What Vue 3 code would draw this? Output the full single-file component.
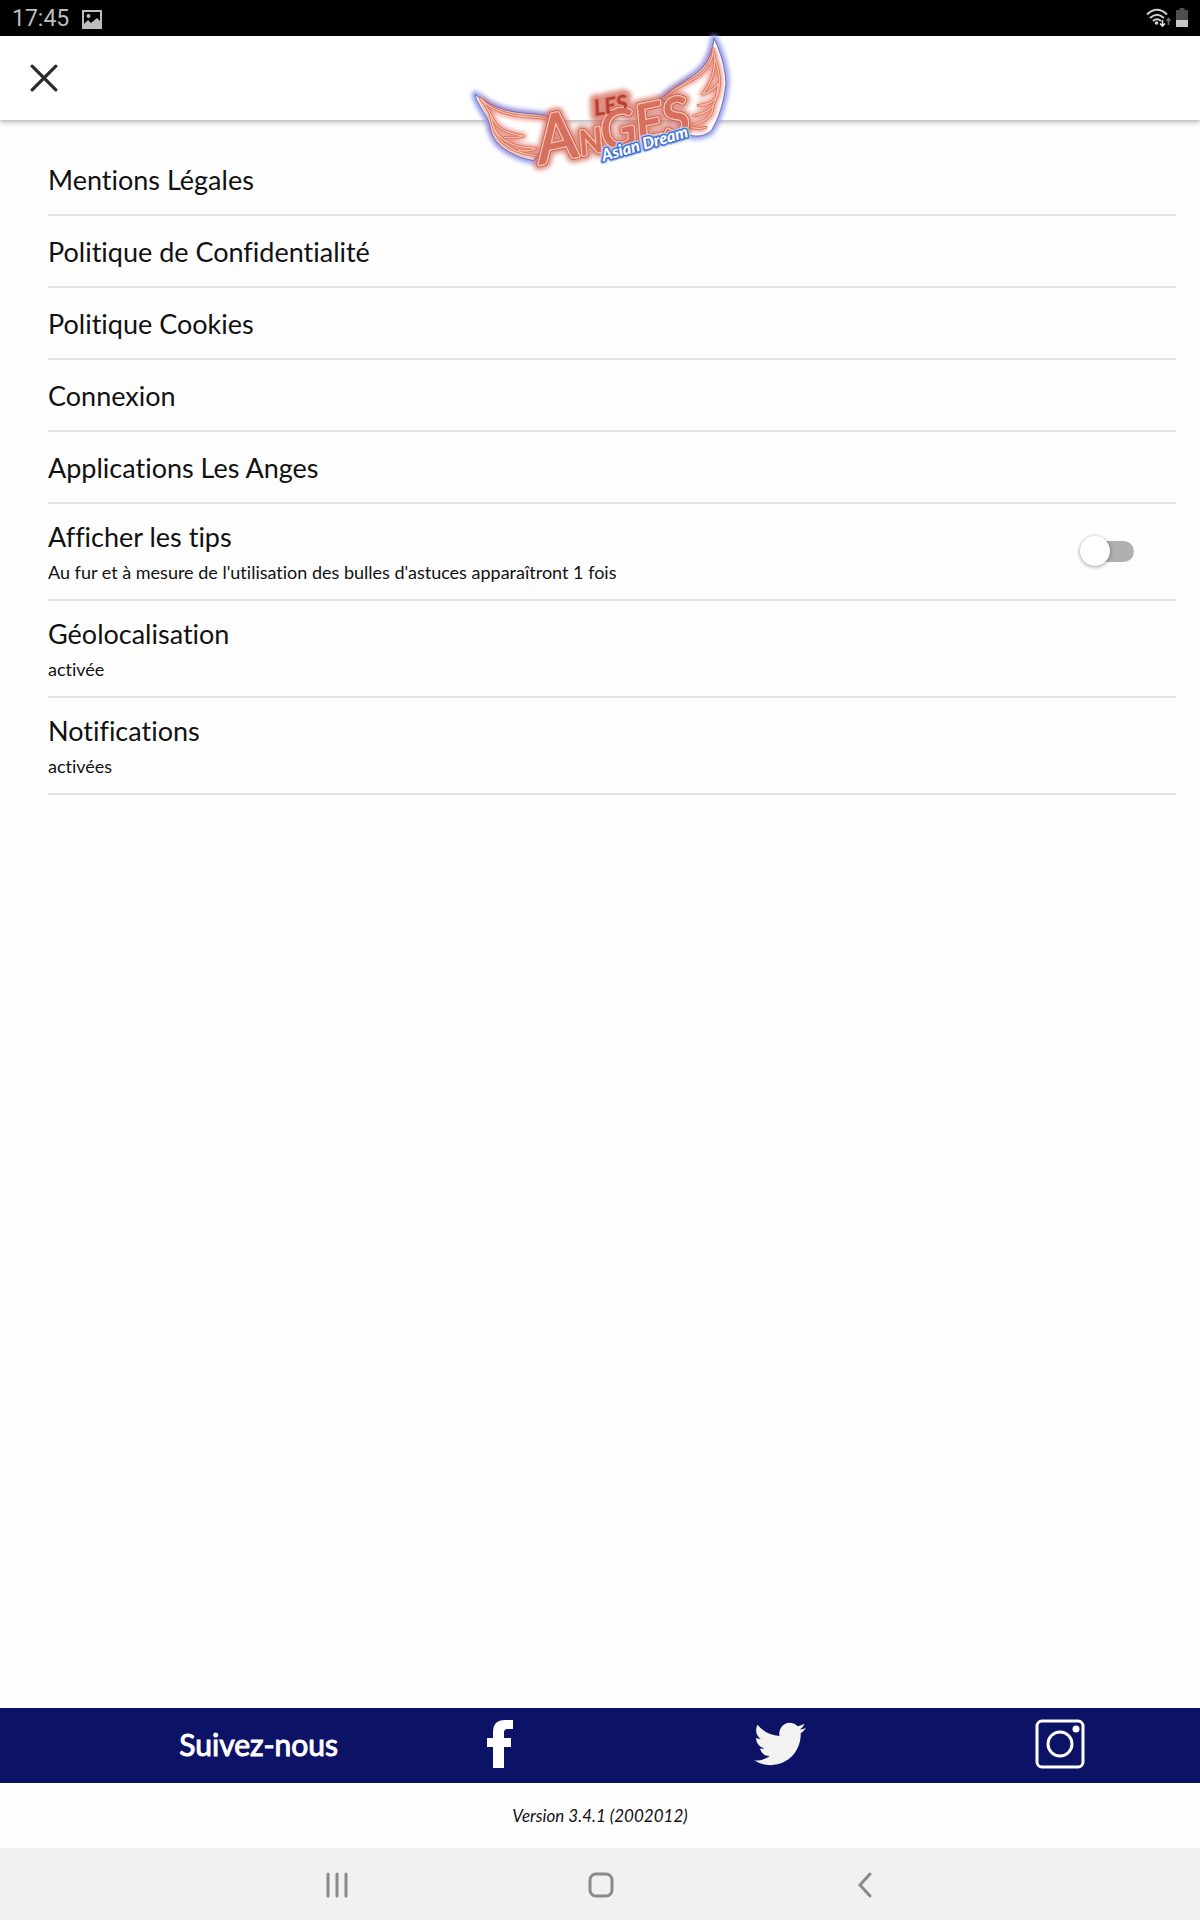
<template>
  <div class="screen">
    <div class="status-bar">
      <span class="clock">17:45</span>
      <svg class="picture" viewBox="0 0 20 19" aria-hidden="true">
        <path
          fill-rule="evenodd"
          d="M0 0h20v19H0zM2 2v12l4-4 3 3 6-5 3 3V2zM6.5 4a2 2 0 1 1 0 4 2 2 0 0 1 0-4z"
        />
      </svg>
      <svg class="wifi" viewBox="0 0 26 20" aria-hidden="true">
        <g fill="none" stroke="#d0d0d0" stroke-width="2">
          <path d="M1 6.500Q11-3 21 6.500" />
          <path d="M4 10Q11 3.500 18 10" />
          <path d="M7 13Q11 9.500 15 13" />
        </g>
        <circle cx="10.500" cy="15" r="1.800" fill="#d0d0d0" />
        <path d="M16.500 12v6M14 15.500l2.500 2.500 2.500-2.500" fill="none" stroke="#e4e4e4" stroke-width="1.600" />
        <path d="M22.500 17v-6M20.500 13l2-2.500 2 2.500" fill="none" stroke="#6a6a6a" stroke-width="1.600" />
      </svg>
      <svg class="battery" viewBox="0 0 12 19" aria-hidden="true">
        <path d="M3.500 0h5v2H12v10H0V2h3.500z" fill="#4d4d4d" />
        <path d="M0 12h12v7H0z" fill="#c8c8c8" />
      </svg>
    </div>

    <header class="header">
      <button class="close" type="button" aria-label="Fermer">
        <svg viewBox="0 0 26 26" aria-hidden="true">
          <path d="M2 2l22 22M24 2L2 24" />
        </svg>
      </button>
      <svg class="logo" viewBox="0 0 840 450" role="img" aria-label="Les Anges Asian Dream">
        <defs>
          <filter id="glow" x="-20%" y="-20%" width="140%" height="140%">
            <feGaussianBlur stdDeviation="7" />
          </filter>
          <filter id="soft" x="-20%" y="-20%" width="140%" height="140%">
            <feGaussianBlur stdDeviation="6" />
          </filter>
        </defs>

        <!-- halo -->
        <g fill="none" stroke="#98a0ee" stroke-linejoin="round" filter="url(#glow)">
          <path :d="leftWing" stroke-width="22" />
          <path :d="rightWing" stroke-width="22" />
        </g>
        <path :d="leftWing" fill="#fff" />
        <path :d="rightWing" fill="#fff" />
        <g fill="none" stroke="#e0705f" stroke-linejoin="round" opacity="0.700" filter="url(#soft)">
          <path v-for="d in feathers" :key="d" :d="d" stroke-width="20" />
        </g>
        <g fill="none" stroke-linejoin="round" stroke-linecap="round">
          <path :d="leftWing" stroke="#6a70b8" stroke-width="3" />
          <path :d="rightWing" stroke="#6a70b8" stroke-width="3" />
          <path v-for="d in feathers" :key="d" :d="d" stroke="#d0675a" stroke-width="8" />
          <path v-for="d in feathers" :key="d" :d="d" stroke="#ffc0a4" stroke-width="4" />
        </g>

        <!-- lettering: halo, edge, tube outline, then face -->
        <g
          v-for="layer in layers"
          :key="layer.name"
          :class="['lettering', layer.name]"
          :filter="layer.filter"
        >
          <text transform="translate(406 258) rotate(-10)" class="les">LES</text>
          <text transform="translate(244 402) rotate(-12)">
            <tspan class="initial">A</tspan><tspan class="small">N</tspan><tspan class="rest">GES</tspan>
          </text>
        </g>
        <text transform="translate(430 394) rotate(-16)" class="tagline tagline-glow">Asian Dream</text>
        <text transform="translate(430 394) rotate(-16)" class="tagline">Asian Dream</text>
      </svg>
    </header>

    <main class="settings">
      <a v-for="link in links" :key="link" class="row" href="#">{{ link }}</a>

      <label class="row detailed">
        <span class="texts">
          <span class="title">Afficher les tips</span>
          <span class="subtitle">Au fur et à mesure de l'utilisation des bulles d'astuces apparaîtront 1 fois</span>
        </span>
        <input v-model="showTips" class="switch" type="checkbox" />
      </label>

      <a v-for="item in permissions" :key="item.title" class="row detailed" href="#">
        <span class="texts">
          <span class="title">{{ item.title }}</span>
          <span class="subtitle">{{ item.state }}</span>
        </span>
      </a>
    </main>

    <section class="social">
      <span class="follow">Suivez-nous</span>
      <a href="#" aria-label="Facebook">
        <svg class="facebook" viewBox="0 0 26 48" aria-hidden="true">
          <path d="M6 48V27H0V18h6v-6C6 4 10 0 18 0h8v9h-5c-3 0-4 1-4 4v5h7v9h-7v21z" />
        </svg>
      </a>
      <a href="#" aria-label="Twitter">
        <svg class="twitter" viewBox="0 2 24 20" aria-hidden="true">
          <path
            d="M23.950 4.570a10 10 0 0 1-2.820.770 4.960 4.960 0 0 0 2.160-2.720 9.900 9.900 0 0 1-3.120 1.190 4.920 4.920 0 0 0-8.390 4.480C7.690 8.090 4.070 6.130 1.640 3.160a4.820 4.820 0 0 0-.67 2.480c0 1.710.87 3.210 2.190 4.100a4.900 4.900 0 0 1-2.230-.62v.06a4.920 4.920 0 0 0 3.950 4.830 5 5 0 0 1-2.210.08 4.940 4.940 0 0 0 4.600 3.420A9.870 9.870 0 0 1 0 19.540a14 14 0 0 0 7.550 2.210c9.050 0 14-7.500 14-13.980 0-.21 0-.42-.02-.63a9.940 9.940 0 0 0 2.420-2.570z"
          />
        </svg>
      </a>
      <a href="#" aria-label="Instagram">
        <svg class="instagram" viewBox="0 0 50 50" aria-hidden="true">
          <rect x="2" y="2" width="46" height="46" rx="5" />
          <circle cx="25" cy="25" r="12" />
          <circle class="dot" cx="41" cy="10" r="3.500" />
        </svg>
      </a>
    </section>

    <p class="version">Version 3.4.1 (2002012)</p>

    <nav class="system-nav">
      <button type="button" aria-label="Applications récentes">
        <svg viewBox="0 0 26 26" aria-hidden="true"><path d="M4 2v22M13 2v22M22 2v22" /></svg>
      </button>
      <button type="button" aria-label="Accueil">
        <svg viewBox="0 0 26 26" aria-hidden="true"><rect x="2" y="2" width="22" height="22" rx="6" /></svg>
      </button>
      <button type="button" aria-label="Retour">
        <svg viewBox="0 0 26 26" aria-hidden="true"><path d="M18 2L8 13l10 11" /></svg>
      </button>
    </nav>
  </div>
</template>

<script setup>
import { ref } from "vue";

const showTips = ref(false);

const links = [
  "Mentions Légales",
  "Politique de Confidentialité",
  "Politique Cookies",
  "Connexion",
  "Applications Les Anges",
];

const permissions = [
  { title: "Géolocalisation", state: "activée" },
  { title: "Notifications", state: "activées" },
];

// logo outlines
const leftWing =
  "M46 194C80 220 110 236 165 246C210 252 250 252 280 264L250 350L222 392C178 384 150 370 125 350C100 330 92 306 88 282C80 250 48 222 46 194Z";
const rightWing =
  "M762 26C780 60 796 110 798 160C792 215 778 262 754 302C732 320 712 320 690 316L640 240L606 204C640 168 700 145 728 112C750 86 758 60 762 26Z";
const feathers = [
  "M62 206C90 238 130 252 180 258C220 262 250 262 276 270",
  "M62 206C88 236 92 262 110 284C130 306 160 312 190 318C170 326 150 324 134 322",
  "M98 284C110 318 134 336 166 346C186 352 206 352 228 356C206 366 190 364 176 360",
  "M92 256C100 300 112 330 146 350C170 368 200 372 236 378",
  "M760 56C758 96 734 126 706 144C670 164 640 176 616 202",
  "M762 70C768 110 760 150 728 192C748 186 764 176 774 160",
  "M766 90C780 130 782 170 770 200C756 222 736 224 714 226",
  "M774 164C772 204 764 228 744 242C728 252 714 254 700 258",
  "M760 230C756 256 744 270 722 276C710 280 700 284 690 290C708 298 724 296 738 292",
];
const layers = [
  { name: "halo", filter: "url(#soft)" },
  { name: "edge" },
  { name: "tube" },
  { name: "face" },
];
</script>

<style>
body {
  margin: 0;
}
</style>

<style scoped>
.screen {
  display: flex;
  flex-direction: column;
  min-height: 100vh;
  background: #fefefe;
  color: #111;
  font-family: Lato, "Liberation Sans", sans-serif;
  font-variant-ligatures: none;
}

a {
  color: inherit;
  text-decoration: none;
}

button {
  padding: 0;
  border: 0;
  background: none;
}

svg {
  display: block;
}

/* status bar */
.status-bar {
  display: flex;
  align-items: center;
  height: 34px;
  padding: 2px 12px 0;
  background: #000;
  color: #bdbdbd;
}

.clock {
  font-family: Roboto, sans-serif;
  font-size: 23px;
  line-height: 34px;
}

.picture {
  width: 20px;
  height: 19px;
  margin-left: 13px;
  fill: #bdbdbd;
}

.wifi {
  width: 26px;
  height: 20px;
  margin: 0 0 2px auto;
}

.battery {
  width: 12px;
  height: 19px;
  margin: 0 0 4px 4px;
}

/* header */
.header {
  position: relative;
  display: flex;
  align-items: center;
  height: 84px;
  padding: 0 30px;
  background: #fff;
  box-shadow: 0 2px 5px rgba(0, 0, 0, 0.3);
}

.close svg {
  width: 28px;
  height: 28px;
  fill: none;
  stroke: #2b2b2b;
  stroke-width: 3;
  stroke-linecap: round;
}

/* hangs below the header */
.logo {
  position: absolute;
  top: -6px;
  left: 50%;
  width: 280px;
  height: 150px;
  transform: translateX(-50%);
}

.lettering {
  font-style: italic;
  stroke-linejoin: round;
}

.les {
  font-size: 66px;
  font-weight: 700;
}

.initial {
  font-size: 195px;
}

.small {
  font-size: 100px;
}

.rest {
  font-size: 156px;
}

.halo {
  fill: #d46a5c;
  stroke: #d46a5c;
  stroke-width: 34;
  opacity: 0.75;
}

.edge {
  fill: #c05c50;
  stroke: #c05c50;
  stroke-width: 17;
}

.tube {
  fill: #ffc5ab;
  stroke: #ffc5ab;
  stroke-width: 12;
}

.face {
  fill: #d66f60;
  stroke: #d66f60;
  stroke-width: 4;
}

.edge .les,
.tube .les {
  fill: #e58674;
  stroke: #e58674;
  stroke-width: 7;
}

.face .les {
  fill: #b5403a;
  stroke: #b5403a;
  stroke-width: 1;
}

.tagline {
  fill: #fff;
  stroke: #3f6fd0;
  stroke-width: 9;
  stroke-linejoin: round;
  paint-order: stroke;
  font-size: 49px;
  font-weight: 900;
  font-style: italic;
}

.tagline-glow {
  stroke: #b9caf2;
  stroke-width: 16;
}

/* settings */
.settings {
  display: flex;
  flex-direction: column;
  flex: 1;
  padding: 24px 24px 24px 48px;
}

.row {
  display: flex;
  align-items: center;
  justify-content: space-between;
  padding: 20px 0 18px;
  border-bottom: 2px solid #e2e2e2;
  font-size: 27px;
  line-height: 32px;
}

.detailed {
  padding: 17px 0 15px;
}

.texts {
  display: flex;
  flex-direction: column;
  gap: 7px;
}

.subtitle {
  font-size: 18px;
  line-height: 24px;
}

.switch {
  position: relative;
  width: 49px;
  height: 21px;
  margin: 0 42px 2px 0;
  border-radius: 11px;
  background: #b0b0b0;
  appearance: none;
}

.switch::before {
  content: "";
  position: absolute;
  top: -5px;
  left: -5px;
  width: 30px;
  height: 30px;
  border-radius: 50%;
  background: #fff;
  box-shadow: 0 1px 4px rgba(0, 0, 0, 0.4);
}

.switch:checked::before {
  left: 24px;
}

/* social links */
.social {
  display: grid;
  grid-template-columns: 9fr 7fr 7fr 7fr;
  align-items: center;
  height: 75px;
  background: #0c1266;
  color: #fff;
}

.social a {
  display: flex;
  justify-content: center;
  padding-bottom: 4px;
}

.follow {
  padding: 0 22px 4px 0;
  font-size: 30px;
  text-align: right;
  -webkit-text-stroke: 1px #fff;
}

.facebook {
  width: 26px;
  height: 48px;
  fill: #fff;
}

.twitter {
  width: 52px;
  height: 44px;
  fill: #f2f2f2;
}

.instagram {
  width: 50px;
  height: 50px;
  fill: none;
  stroke: #fff;
  stroke-width: 3;
}

.instagram .dot {
  fill: #fff;
  stroke: none;
}

.version {
  margin: 0;
  font-size: 17px;
  font-style: italic;
  line-height: 65px;
  text-align: center;
}

/* system navigation */
.system-nav {
  display: grid;
  grid-template-columns: repeat(3, 22%);
  justify-content: center;
  height: 70px;
  padding: 2px 0 0 2px;
  background: #f1f1f1;
}

.system-nav button {
  display: flex;
  align-items: center;
  justify-content: center;
}

.system-nav svg {
  width: 26px;
  height: 26px;
  fill: none;
  stroke: #8a8a8a;
  stroke-width: 3;
  stroke-linecap: round;
}
</style>
